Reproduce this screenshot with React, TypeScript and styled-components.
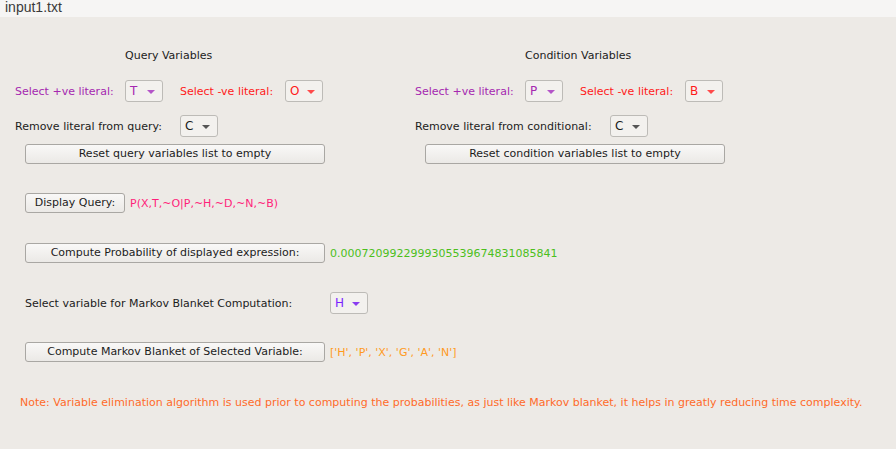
import React from "react";
import styled, { createGlobalStyle } from "styled-components";

const Global = createGlobalStyle`
  html, body { margin: 0; padding: 0; }
  body {
    background: #edeae6;
    font-family: "DejaVu Sans", "Liberation Sans", sans-serif;
    font-size: 11px;
    color: #1c1c1c;
  }
`;

const Window = styled.div`
  width: 896px;
  height: 449px;
  background: #edeae6;
  display: flex;
  flex-direction: column;
  overflow: hidden;
`;

const TitleBar = styled.div`
  height: 17px;
  background: #f6f5f4;
  padding-left: 5px;
  font-family: "Liberation Sans", Arial, sans-serif;
  font-size: 14px;
  line-height: 15px;
  color: #3a3a3a;
`;

const Body = styled.div`
  display: flex;
  flex-direction: column;
  padding-top: 31px;
`;

const TopGrid = styled.div`
  display: grid;
  grid-template-columns: 400px 400px;
  padding-left: 15px;
`;

const Section = styled.div`
  display: flex;
  flex-direction: column;
`;

const Heading = styled.div`
  padding-left: 110px;
  height: 16px;
  line-height: 16px;
`;

const Row = styled.div<{ $mt?: number }>`
  display: flex;
  align-items: center;
  height: 22px;
  margin-top: ${(p) => p.$mt ?? 0}px;
`;

const Label = styled.span<{ $w: number; $color?: string; $ml?: number }>`
  width: ${(p) => p.$w}px;
  margin-left: ${(p) => p.$ml ?? 0}px;
  flex: none;
  color: ${(p) => p.$color ?? "#1c1c1c"};
  white-space: nowrap;
`;

const Combo = styled.div<{ $color?: string; $w?: number }>`
  box-sizing: border-box;
  width: ${(p) => p.$w ?? 38}px;
  height: 22px;
  flex: none;
  border: 1px solid #bdbbb7;
  border-radius: 3px;
  background: #f3f1ee;
  display: flex;
  align-items: center;
  justify-content: space-between;
  padding: 0 7px 0 4px;
  color: ${(p) => p.$color ?? "#1c1c1c"};
  font-size: 12px;
`;

const Arrow = styled.span<{ $color?: string }>`
  width: 0;
  height: 0;
  border-left: 4px solid transparent;
  border-right: 4px solid transparent;
  border-top: 4px solid ${(p) => p.$color ?? "#555"};
  margin-top: 1px;
`;

const Button = styled.button<{ $w: number }>`
  box-sizing: border-box;
  width: ${(p) => p.$w}px;
  height: 20px;
  flex: none;
  border: 1px solid #a9a7a3;
  border-radius: 3px;
  background: linear-gradient(#f9f8f7, #ebe9e6);
  font-family: "DejaVu Sans", sans-serif;
  font-size: 11px;
  color: #1c1c1c;
  padding: 0;
  line-height: 18px;
`;

const ButtonRow = styled.div<{ $mt: number }>`
  display: flex;
  align-items: center;
  margin-top: ${(p) => p.$mt}px;
  padding-left: 10px;
`;

const ActionRow = styled.div<{ $mt: number; $h?: number }>`
  display: flex;
  align-items: center;
  gap: 5px;
  height: ${(p) => p.$h ?? 20}px;
  margin-top: ${(p) => p.$mt}px;
  padding-left: 25px;
`;

const Result = styled.span<{ $color: string }>`
  color: ${(p) => p.$color};
  white-space: nowrap;
`;

const Note = styled.div`
  margin-top: 34px;
  padding-left: 20px;
  font-family: "DejaVu Sans", sans-serif;
  color: #ff6a2a;
  white-space: nowrap;
`;

const PURPLE = "#a528b0";
const RED = "#ff1a1a";

const Combobox = ({ value, color, arrow }: { value: string; color?: string; arrow?: string }) => (
  <Combo $color={color}>
    <span>{value}</span>
    <Arrow $color={arrow ?? color} />
  </Combo>
);

const VarSection = ({
  title,
  plus,
  minus,
  removeLabel,
  removeW,
  reset,
}: {
  title: string;
  plus: string;
  minus: string;
  removeLabel: string;
  removeW: number;
  reset: string;
}) => (
  <Section>
    <Heading>{title}</Heading>
    <Row $mt={16}>
      <Label $w={110} $color={PURPLE}>Select +ve literal:</Label>
      <Combobox value={plus} color={PURPLE} arrow="#b455c8" />
      <Label $w={105} $ml={17} $color={RED}>Select -ve literal:</Label>
      <Combobox value={minus} color={RED} arrow="#ff4a4a" />
    </Row>
    <Row $mt={13}>
      <Label $w={removeW}>{removeLabel}</Label>
      <Combobox value="C" arrow="#555" />
    </Row>
    <ButtonRow $mt={7}>
      <Button $w={300}>{reset}</Button>
    </ButtonRow>
  </Section>
);

export default function App() {
  return (
    <Window>
      <Global />
      <TitleBar>input1.txt</TitleBar>
      <Body>
        <TopGrid>
          <VarSection
            title="Query Variables"
            plus="T"
            minus="O"
            removeLabel="Remove literal from query:"
            removeW={165}
            reset="Reset query variables list to empty"
          />
          <VarSection
            title="Condition Variables"
            plus="P"
            minus="B"
            removeLabel="Remove literal from conditional:"
            removeW={195}
            reset="Reset condition variables list to empty"
          />
        </TopGrid>
        <ActionRow $mt={29}>
          <Button $w={100}>Display Query:</Button>
          <Result $color="#ff1f7a">P(X,T,~O|P,~H,~D,~N,~B)</Result>
        </ActionRow>
        <ActionRow $mt={30}>
          <Button $w={300}>Compute Probability of displayed expression:</Button>
          <Result $color="#4cbf1c">0.0007209922999305539674831085841</Result>
        </ActionRow>
        <ActionRow $mt={29} $h={22}>
          <Label $w={300}>Select variable for Markov Blanket Computation:</Label>
          <Combobox value="H" color="#7a1fff" arrow="#8a3cf0" />
        </ActionRow>
        <ActionRow $mt={28}>
          <Button $w={300}>Compute Markov Blanket of Selected Variable:</Button>
          <Result $color="#ff9a1f">['H', 'P', 'X', 'G', 'A', 'N']</Result>
        </ActionRow>
        <Note>
          Note: Variable elimination algorithm is used prior to computing the probabilities, as just like Markov blanket, it helps in greatly reducing time complexity.
        </Note>
      </Body>
    </Window>
  );
}
